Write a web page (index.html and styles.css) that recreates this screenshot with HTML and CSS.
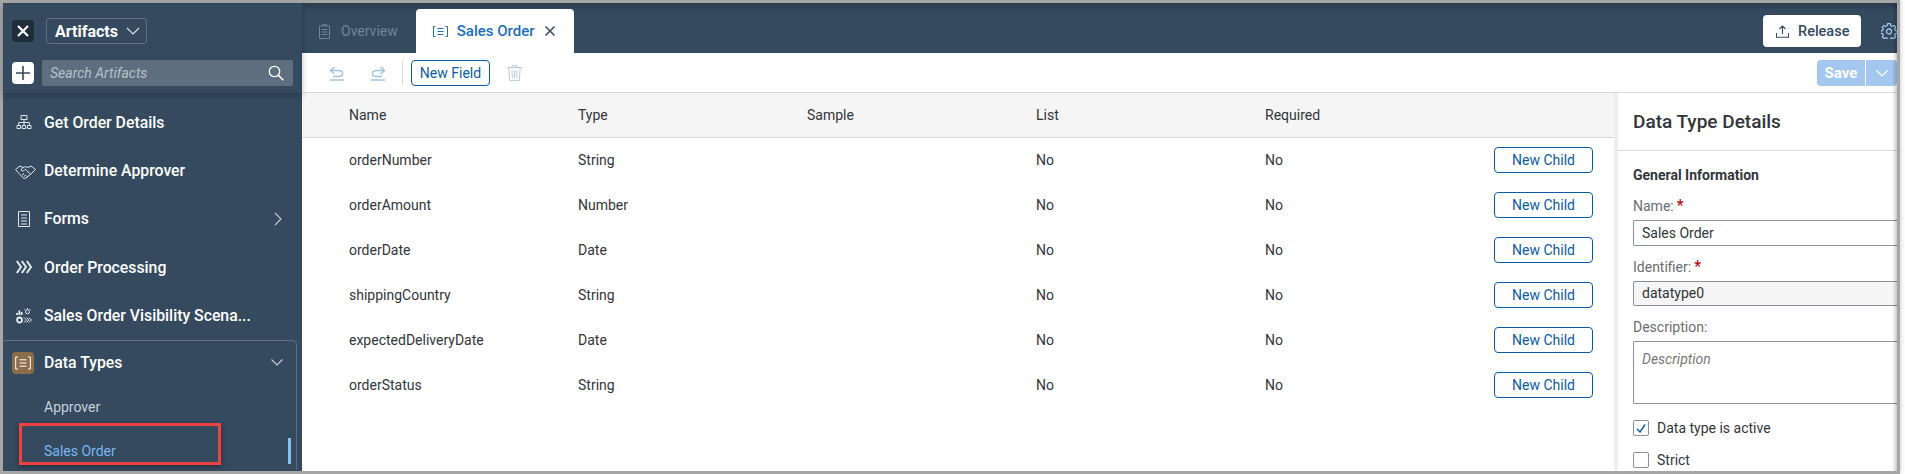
FILE: index.html
```html
<!DOCTYPE html>
<html lang="en">
<head>
  <meta charset="UTF-8" />
  <title>Sales Order - Artifacts</title>
  <link rel="stylesheet" href="styles.css">
</head>
<body>
  <div class="frame">
    <div class="sidebar">
      <div class="side-top">
        <div class="side-row">
          <div class="btn-close">
            <svg width="14" height="14" viewBox="0 0 14 14"><path d="M2 2l10 10M12 2L2 12" stroke="#fff" stroke-width="2.2" fill="none"/></svg>
          </div>
          <div class="artifacts">Artifacts
            <svg width="14" height="8" viewBox="0 0 14 8"><path d="M1 1l6 6 6-6" stroke="#dfe4ea" stroke-width="1.1" fill="none"/></svg>
          </div>
        </div>
        <div class="side-row search-row">
          <div class="btn-plus">
            <svg width="14" height="14" viewBox="0 0 14 14"><path d="M7 0v14M0 7h14" stroke="#354a5f" stroke-width="1.6" fill="none"/></svg>
          </div>
          <div class="search">
            <span>Search Artifacts</span>
            <svg width="16" height="16" viewBox="0 0 16 16"><circle cx="6.5" cy="6.5" r="5.2" stroke="#fff" stroke-width="1.3" fill="none"/><path d="M10.3 10.3l5 5" stroke="#fff" stroke-width="1.6" fill="none"/></svg>
          </div>
        </div>
      </div>

      <div class="side-list">
        <div class="side-item">
          <svg class="side-icon" width="16" height="16" viewBox="0 0 16 16"><path d="M5 1.5h6v4H5zM1 11.5h3.5v3H1zM6.2 11.5h3.5v3H6.2zM11.5 11.5H15v3h-3.5zM8 5.5v6M2.7 11.5V8.5h10.6v3" stroke="#dfe6ee" fill="none"/></svg>
          <span>Get Order Details</span>
        </div>
        <div class="side-item">
          <svg class="side-icon icon-wide" width="21" height="16" viewBox="0 0 21 16"><path d="M.5 6.500L5 3l3 1.500c2-1 3-1 5 0L16 3l4.500 3.500L17 10l-6 5c-1 .8-2 .5-3-.2L4 10.500zM8 4.500L6 7c1 1.500 2.500 1 3.500 0l1-.6 5 4.600M7 12l2-1.500M9 13.500l2-1.500M11 14.500l2-1.500" stroke="#dfe6ee" fill="none"/></svg>
          <span>Determine Approver</span>
        </div>
        <div class="side-item">
          <svg class="side-icon" width="16" height="16" viewBox="0 0 16 16"><path d="M2.500.5h11v15h-11zM5 4h6M5 7h6M5 10h6M5 13h6" stroke="#dfe6ee" fill="none"/></svg>
          <span>Forms</span>
          <svg class="side-arrow" width="8" height="14" viewBox="0 0 8 14"><path d="M1 1l6 6-6 6" stroke="#c5cfda" stroke-width="1.1" fill="none"/></svg>
        </div>
        <div class="side-item">
          <svg class="side-icon" width="16" height="14" viewBox="0 0 16 14"><path d="M.8 1l4.200 6-4.200 6M5.800 1L10 7l-4.200 6M10.800 1L15 7l-4.200 6" stroke="#e3e9f0" stroke-width="2" fill="none"/></svg>
          <span>Order Processing</span>
        </div>
        <div class="side-item">
          <svg class="side-icon" width="16" height="16" viewBox="0 0 16 16"><path d="M1 7V5M3.300 7V2.500M5.600 7V4" stroke="#e3e9f0" stroke-width="1.800" fill="none"/><circle cx="11.500" cy="3.800" r="2" stroke="#e3e9f0" fill="none"/><path d="M11.500 0v1M8.500 1l1 1M14.500 1l-1 1" stroke="#e3e9f0" fill="none"/><circle cx="3.500" cy="12" r="2.500" stroke="#e3e9f0" stroke-width="1.800" fill="none"/><path d="M8 9.500l2.500 2.500L8 14.500M10.500 9.500L13 12l-2.500 2.500M13 9.500l2.500 2.500-2.500 2.500" stroke="#e3e9f0" fill="none"/></svg>
          <span>Sales Order Visibility Scena...</span>
        </div>

        <div class="side-group">
          <div class="group-head">
            <div class="group-icon">
              <svg width="16" height="14" viewBox="0 0 16 14"><path d="M3 1H.7v12H3M13 1h2.300v12H13M4.500 3.800h7M4.500 7h7M4.500 10.200h7" stroke="#fff" fill="none"/></svg>
            </div>
            <span>Data Types</span>
            <svg class="group-arrow" width="12" height="7" viewBox="0 0 12 7"><path d="M.5.5L6 6 11.500.5" stroke="#c5cfda" stroke-width="1.100" fill="none"/></svg>
          </div>
          <div class="group-item">Approver</div>
          <div class="group-item active">Sales Order</div>
          <div class="scroll-mark"></div>
        </div>
      </div>
      <div class="callout"></div>
    </div>

    <div class="main">
      <div class="tabs">
        <div class="tab">
          <svg width="11" height="15" viewBox="0 0 11 15"><path d="M.5 2h10v12.500H.5zM3.500 2V.6h4V2M2.500 5.500h6M2.500 8h6M2.500 10.500h6" stroke="#6f8498" fill="none"/></svg>
          <span>Overview</span>
        </div>
        <div class="tab tab-active">
          <svg width="15" height="11" viewBox="0 0 15 11"><path d="M2.500.5h-2v10h2M12.500.5h2v10h-2M4.500 2.500h6M4.500 5.500h6M4.500 8.500h6" stroke="#1b6ec2" fill="none"/></svg>
          <span>Sales Order</span>
          <svg class="tab-x" width="10" height="10" viewBox="0 0 10 10"><path d="M.5.500l9 9M9.500.500l-9 9" stroke="#36495f" stroke-width="1.500" fill="none"/></svg>
        </div>
        <div class="release">
          <svg width="13" height="13" viewBox="0 0 13 13"><path d="M6.500 9V1M3.500 4l3-3 3 3M.5 8v4.200h12V8" stroke="#354a5f" stroke-width="1.100" fill="none"/></svg>
          <span>Release</span>
        </div>
        <svg class="gear" width="16" height="16" viewBox="0 0 16 16"><path d="M6.700.7h2.600l.4 2 1.500.7 1.800-1 1.700 1.800-1 1.700.6 1.500 2 .5v2.300l-2 .6-.6 1.400 1 1.800-1.700 1.700-1.800-1-1.500.7-.4 1.900H6.700l-.5-1.900-1.400-.7-1.800 1-1.700-1.700 1-1.800-.6-1.400-2-.6V7.900l2-.5.6-1.500-1-1.700L2.900 2.400l1.800 1 1.500-.7z" stroke="#a8cdf5" stroke-width="1.200" fill="none"/><circle cx="8" cy="8.400" r="2.500" stroke="#a8cdf5" stroke-width="1.200" fill="none"/></svg>
      </div>

      <div class="toolbar">
        <svg class="tool-icon" width="16" height="15" viewBox="0 0 16 15"><path d="M5.500 1L1.500 4.500l4 3.500M1.500 4.500h8c5.500 0 5.500 6 0 6H4M1 14h14" stroke="#a3c2e0" stroke-width="1.500" fill="none"/></svg>
        <svg class="tool-icon redo" width="16" height="15" viewBox="0 0 16 15"><path d="M10.500 1l4 3.500-4 3.500M14.500 4.500h-8c-5.500 0-5.500 6 0 6H12M1 14h14" stroke="#a3c2e0" stroke-width="1.500" fill="none"/></svg>
        <div class="tool-sep"></div>
        <button class="btn-outline btn-field">New Field</button>
        <svg class="trash" width="15" height="16" viewBox="0 0 15 16"><path d="M0 2.500h15M5 2.500V.6h5v1.900M1.800 2.500l.9 13h9.600l.9-13M5 5.500l.4 7.500M7.500 5.500V13M10 5.500L9.600 13" stroke="#b9cde0" fill="none"/></svg>
        <div class="save-group">
          <div class="save">Save</div>
          <div class="save-arrow">
            <svg width="12" height="7" viewBox="0 0 12 7"><path d="M.5.500L6 6 11.500.500" stroke="#fff" stroke-width="1.200" fill="none"/></svg>
          </div>
        </div>
      </div>

      <div class="content">
        <div class="table">
          <div class="row row-head">
            <div>Name</div><div>Type</div><div>Sample</div><div>List</div><div>Required</div>
          </div>
          <div class="row"><div>orderNumber</div><div>String</div><div></div><div>No</div><div>No</div><button class="btn-outline btn-child">New Child</button></div>
          <div class="row"><div>orderAmount</div><div>Number</div><div></div><div>No</div><div>No</div><button class="btn-outline btn-child">New Child</button></div>
          <div class="row"><div>orderDate</div><div>Date</div><div></div><div>No</div><div>No</div><button class="btn-outline btn-child">New Child</button></div>
          <div class="row"><div>shippingCountry</div><div>String</div><div></div><div>No</div><div>No</div><button class="btn-outline btn-child">New Child</button></div>
          <div class="row"><div>expectedDeliveryDate</div><div>Date</div><div></div><div>No</div><div>No</div><button class="btn-outline btn-child">New Child</button></div>
          <div class="row"><div>orderStatus</div><div>String</div><div></div><div>No</div><div>No</div><button class="btn-outline btn-child">New Child</button></div>
        </div>

        <div class="details">
          <div class="details-head">Data Type Details</div>
          <div class="details-body">
            <div class="section-title">General Information</div>
            <div class="field-label">Name:<span class="req">*</span></div>
            <div class="input">Sales Order</div>
            <div class="field-label">Identifier:<span class="req">*</span></div>
            <div class="input readonly">datatype0</div>
            <div class="field-label">Description:</div>
            <div class="input textarea">Description</div>
            <div class="check-row">
              <div class="check">
                <svg width="10" height="9" viewBox="0 0 10 9"><path d="M1 5l3 3 5-7.500" stroke="#0a5ba5" stroke-width="1.400" fill="none"/></svg>
              </div>
              <span>Data type is active</span>
            </div>
            <div class="check-row">
              <div class="check"></div>
              <span>Strict</span>
            </div>
          </div>
        </div>
      </div>
    </div>
    <div class="edge-shadow"></div>
  </div>
</body>
</html>
```

FILE: styles.css
```css
* {
  box-sizing: border-box;
}

body {
  margin: 0;
  background-color: #fff;
  font-family: Roboto, "Noto Sans", sans-serif;
  font-size: 14px;
  color: #32363a;
  overflow: hidden;
}

.frame {
  position: relative;
  display: flex;
  width: 1900px;
  height: 474px;
  border: 3px solid #a6a6a6;
  box-shadow: 0 0 5px rgba(0, 0, 0, 0.25);
}

.edge-shadow {
  position: absolute;
  top: 0;
  right: 0;
  bottom: 0;
  width: 5px;
  background: linear-gradient(to right, rgba(0, 0, 0, 0), rgba(0, 0, 0, 0.2));
}

/* left navigation */
.sidebar {
  position: relative;
  flex: 0 0 298px;
  height: 468px;
  background-color: #354a5f;
  color: #fff;
}

.side-top {
  height: 90px;
  padding: 15px 9px 0;
  box-shadow: 0 3px 6px rgba(20, 32, 46, 0.3);
}

.side-row {
  display: flex;
  align-items: center;
}

.search-row {
  margin-top: 16px;
}

.btn-close {
  display: flex;
  align-items: center;
  justify-content: center;
  width: 22px;
  height: 22px;
  background-color: #1f2d3b;
  border-radius: 4px;
}

.artifacts {
  display: flex;
  align-items: center;
  gap: 8px;
  width: 101px;
  height: 26px;
  margin-left: 12px;
  padding-left: 8px;
  border: 1px solid #5f7085;
  border-radius: 3px;
  font-size: 16px;
  font-weight: 700;
}

.btn-plus {
  display: flex;
  align-items: center;
  justify-content: center;
  width: 22px;
  height: 22px;
  background-color: #fff;
  border-radius: 4px;
}

.search {
  display: flex;
  align-items: center;
  justify-content: space-between;
  width: 251px;
  height: 26px;
  margin-left: 8px;
  padding: 0 9px 0 8px;
  background-color: #5f6e7f;
  border-radius: 2px;
  color: #b9c1ca;
  font-size: 14px;
  font-style: italic;
}

.side-list {
  padding-top: 5px;
}

.side-item {
  display: flex;
  align-items: center;
  height: 48.4px;
  padding-left: 13px;
  font-size: 15.8px;
  font-weight: 500;
}

.side-icon {
  flex: 0 0 auto;
  margin-right: 12px;
  width: 16px;
}

.icon-wide {
  width: 21px;
  margin-left: -1px;
  margin-right: 8px;
}

.side-arrow {
  margin-left: auto;
  margin-right: 20px;
}

.side-group {
  position: relative;
  width: 294px;
  height: 130px;
  border-top: 1px solid #5f7085;
  border-right: 1px solid #5f7085;
  border-top-right-radius: 5px;
}

.group-head {
  display: flex;
  align-items: center;
  height: 44px;
  padding-left: 9px;
  font-size: 15.8px;
  font-weight: 500;
}

.group-icon {
  display: flex;
  align-items: center;
  justify-content: center;
  width: 22px;
  height: 22px;
  margin-right: 10px;
  background-color: #8b6c4b;
  border-radius: 4px;
}

.group-arrow {
  margin-left: auto;
  margin-right: 13px;
}

.group-item {
  height: 44px;
  line-height: 44px;
  padding-left: 41px;
  color: #c8d0d9;
}

.group-item.active {
  color: #7ab5ee;
}

.scroll-mark {
  position: absolute;
  right: 5px;
  top: 97px;
  width: 3px;
  height: 26px;
  background-color: #89bff0;
}

/* red highlight drawn over the screenshot */
.callout {
  position: absolute;
  left: 16px;
  top: 420px;
  width: 202px;
  height: 42px;
  border: 3px solid #f04040;
  box-shadow: 0 2px 5px rgba(0, 0, 0, 0.35);
}

/* main area */
.main {
  flex: 1;
  min-width: 0;
  height: 468px;
}

.tabs {
  display: flex;
  align-items: flex-end;
  height: 50px;
  padding-left: 17px;
  background-color: #354a5f;
  box-shadow: inset 0 6px 6px -4px rgba(20, 32, 46, 0.5);
}

.tab {
  display: flex;
  align-items: center;
  gap: 11px;
  height: 44px;
  color: #6f8498;
  font-size: 14px;
}

.tab-active {
  gap: 9px;
  width: 158px;
  margin-left: 18px;
  padding-left: 17px;
  background-color: #fff;
  border-radius: 4px 4px 0 0;
  color: #1b6ec2;
  font-size: 15px;
  font-weight: 500;
}

.tab-x {
  margin-left: 1px;
}

.release {
  display: flex;
  align-items: center;
  gap: 9px;
  width: 98px;
  height: 32px;
  margin-left: auto;
  margin-bottom: 6px;
  padding-left: 13px;
  background-color: #fff;
  border-radius: 4px;
  color: #354a5f;
  font-size: 14.5px;
  font-weight: 500;
}

.gear {
  margin-left: 20px;
  margin-bottom: 14px;
}

.toolbar {
  display: flex;
  align-items: center;
  height: 40px;
  padding: 1px 0 0 27px;
  border-bottom: 1px solid #d9d9d9;
}

.tool-icon.redo {
  margin-left: 25px;
}

.tool-sep {
  width: 1px;
  height: 24px;
  margin-left: 16px;
  background-color: #d9d9d9;
}

.btn-outline {
  padding: 0;
  background-color: #fff;
  border: 1px solid #0a5ba5;
  border-radius: 4px;
  color: #0a5ba5;
  font-family: inherit;
  font-size: 14px;
}

.btn-field {
  width: 79px;
  height: 26px;
  margin-left: 8px;
}

.trash {
  margin-left: 17px;
}

.save-group {
  display: flex;
  height: 26px;
  margin-left: auto;
  color: #fff;
}

.save {
  width: 48px;
  line-height: 26px;
  text-align: center;
  background-color: #a3c7ef;
  border-radius: 4px 0 0 4px;
  font-size: 15px;
  font-weight: 700;
}

.save-arrow {
  display: flex;
  align-items: center;
  justify-content: center;
  width: 31px;
  margin-left: 1px;
  background-color: #a3c7ef;
  border-radius: 0 4px 4px 0;
}

.content {
  display: flex;
  height: 378px;
}

.table {
  flex: 0 0 1312px;
}

.row {
  display: grid;
  grid-template-columns: 229px 229px 229px 229px 229px 99px;
  align-items: center;
  height: 45px;
  padding-left: 47px;
}

.row-head {
  margin-bottom: -1px;
  background-color: #f5f5f5;
  border-bottom: 1px solid #d9d9d9;
}

.btn-child {
  width: 99px;
  height: 26px;
}

.details {
  flex: 1;
  min-width: 0;
  border-left: 4px solid #eeeeee;
}

.details-head {
  height: 58px;
  line-height: 58px;
  padding-left: 15px;
  border-bottom: 1px solid #d9d9d9;
  font-size: 19px;
  font-weight: 500;
}

.details-body {
  padding: 14px 0 0 15px;
}

.section-title {
  line-height: 20px;
  font-weight: 700;
  font-size: 14px;
}

.field-label {
  margin-top: 12px;
  margin-bottom: 5px;
  line-height: 18px;
  color: #6a6d70;
}

.req {
  margin-left: 3px;
  color: #bb0000;
  font-size: 16px;
}

.input {
  height: 26px;
  line-height: 24px;
  padding-left: 8px;
  background-color: #fff;
  border: 1px solid #89919a;
  border-right: 0;
  border-radius: 2px 0 0 2px;
}

.readonly {
  height: 25px;
  line-height: 23px;
  background-color: #f5f5f5;
}

.textarea {
  height: 63px;
  padding-top: 5px;
  color: #74777a;
  font-style: italic;
}

.check-row {
  display: flex;
  align-items: center;
  gap: 8px;
  margin-top: 16px;
  line-height: 16px;
}

.check {
  display: flex;
  align-items: center;
  justify-content: center;
  width: 16px;
  height: 16px;
  border: 1px solid #89919a;
  border-radius: 2px;
}
```
